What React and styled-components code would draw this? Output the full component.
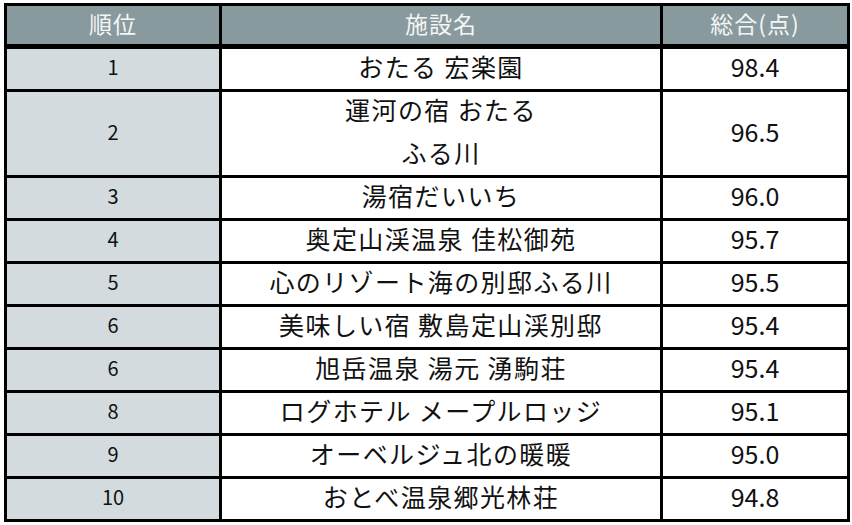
import React from 'react';
import styled, { createGlobalStyle } from 'styled-components';

const GlobalStyle = createGlobalStyle`
  html, body {
    margin: 0;
    padding: 0;
    background: #ffffff;
  }
  body {
    font-family: "Noto Sans CJK JP", "Noto Sans", sans-serif;
  }
`;

const Page = styled.div`
  padding: 3px 0 0 4px;
`;

const Table = styled.div`
  display: grid;
  grid-template-columns: 212px 438px 184px;
  grid-auto-rows: 40px;
  gap: 3px;
  padding: 3px;
  width: max-content;
  background: #000;
`;

const HeadCell = styled.div`
  height: 38px;
  box-sizing: border-box;
  padding-bottom: 5px;
  display: flex;
  align-items: center;
  justify-content: center;
  background: #889a9e;
  color: #f4f6f6;
  font-size: 23px;
  letter-spacing: 1px;
`;

const Cell = styled.div`
  box-sizing: border-box;
  padding-bottom: 5px;
  display: flex;
  align-items: center;
  justify-content: center;
  text-align: center;
  background: ${(p) => (p.rank ? '#d4dbde' : '#ffffff')};
  color: #111;
  font-size: ${(p) => (p.rank ? '20px' : p.score ? '25px' : '25px')};
  letter-spacing: ${(p) => (p.score || p.rank ? '0' : '1.4px')};
  line-height: 43px;
  grid-row: span ${(p) => p.span || 1};
`;

const Row = styled.div`
  display: contents;
`;

const rows = [
  { rank: '1', name: ['おたる 宏楽園'], score: '98.4' },
  { rank: '2', name: ['運河の宿 おたる', 'ふる川'], score: '96.5' },
  { rank: '3', name: ['湯宿だいいち'], score: '96.0' },
  { rank: '4', name: ['奥定山渓温泉 佳松御苑'], score: '95.7' },
  { rank: '5', name: ['心のリゾート海の別邸ふる川'], score: '95.5' },
  { rank: '6', name: ['美味しい宿 敷島定山渓別邸'], score: '95.4' },
  { rank: '6', name: ['旭岳温泉 湯元 湧駒荘'], score: '95.4' },
  { rank: '8', name: ['ログホテル メープルロッジ'], score: '95.1' },
  { rank: '9', name: ['オーベルジュ北の暖暖'], score: '95.0' },
  { rank: '10', name: ['おとべ温泉郷光林荘'], score: '94.8' },
];

export default function App() {
  return (
    <Page>
      <GlobalStyle />
      <Table>
        <Row>
          <HeadCell>順位</HeadCell>
          <HeadCell>施設名</HeadCell>
          <HeadCell>総合(点)</HeadCell>
        </Row>
        {rows.map((r, i) => (
          <Row key={i}>
            <Cell rank span={r.name.length}>{r.rank}</Cell>
            <Cell span={r.name.length}>
              <div>
                {r.name.map((line, j) => (
                  <div key={j}>{line}</div>
                ))}
              </div>
            </Cell>
            <Cell score span={r.name.length}>{r.score}</Cell>
          </Row>
        ))}
      </Table>
    </Page>
  );
}
